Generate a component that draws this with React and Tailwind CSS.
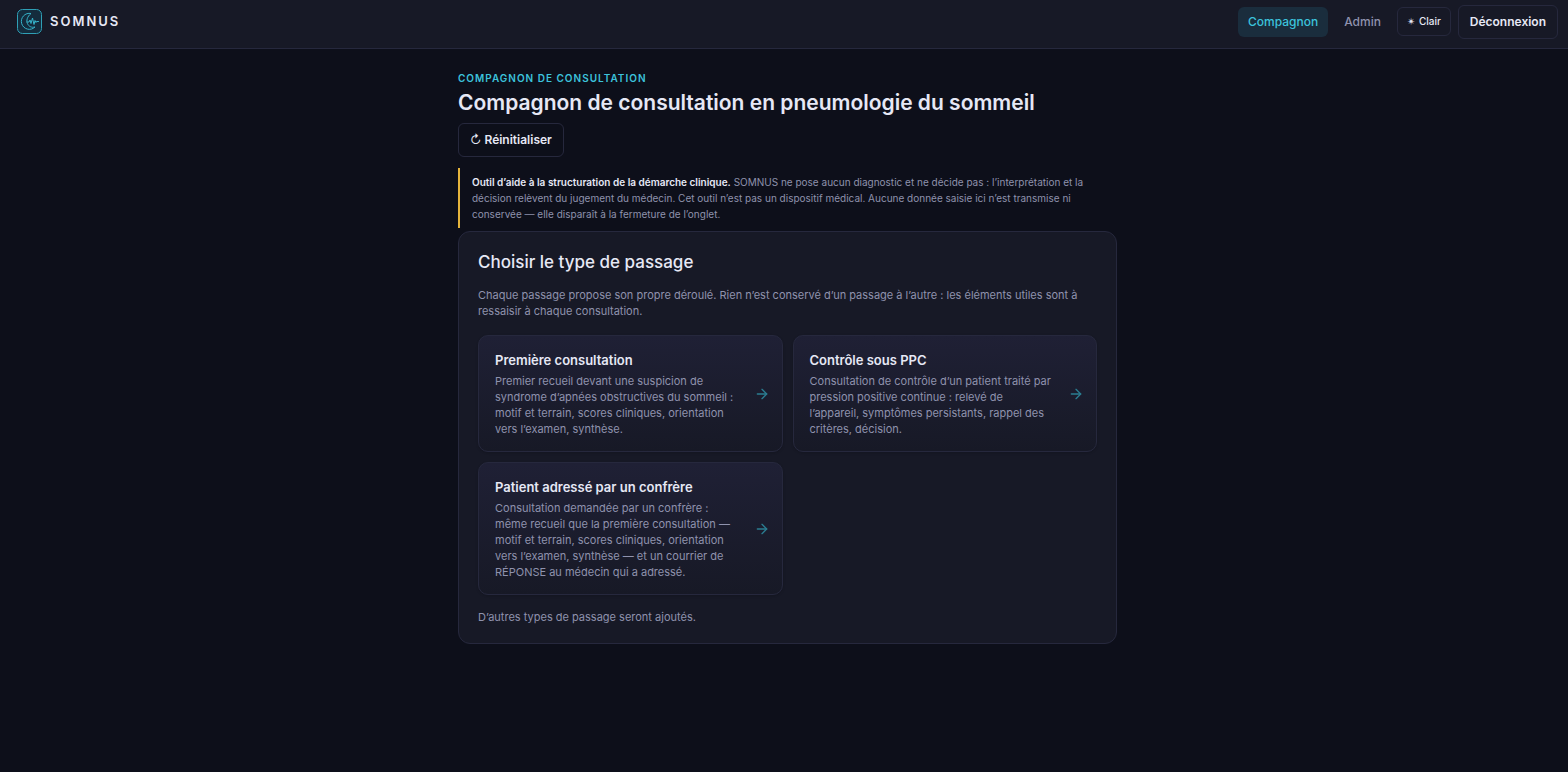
import React from "react";
import { ArrowRight } from "lucide-react";

const passages = [
  {
    id: "premiere",
    title: "Première consultation",
    text: "Premier recueil devant une suspicion de syndrome d’apnées obstructives du sommeil : motif et terrain, scores cliniques, orientation vers l’examen, synthèse.",
  },
  {
    id: "controle",
    title: "Contrôle sous PPC",
    text: "Consultation de contrôle d’un patient traité par pression positive continue : relevé de l’appareil, symptômes persistants, rappel des critères, décision.",
  },
  {
    id: "confrere",
    title: "Patient adressé par un confrère",
    text: "Consultation demandée par un confrère : même recueil que la première consultation — motif et terrain, scores cliniques, orientation vers l’examen, synthèse — et un courrier de RÉPONSE au médecin qui a adressé.",
  },
];

function Logo() {
  return (
    <svg viewBox="0 0 50 50" className="w-[25px] h-[25px]" fill="none">
      <rect x="1" y="1" width="48" height="48" rx="10" fill="#142c3d" stroke="#2f9fb5" strokeWidth="2" />
      <path
        d="M28 9 A16 16 0 1 0 36 36 C22 40 12 22 28 9 Z"
        stroke="#36b3ca"
        strokeWidth="2"
        strokeLinejoin="round"
      />
      <path
        d="M20 26 H24 L26 22 L28 29 L31 18 L34 31 L36 23 L38 27 L39 25 H43"
        stroke="#36b3ca"
        strokeWidth="2"
        strokeLinecap="round"
        strokeLinejoin="round"
      />
    </svg>
  );
}

function Header() {
  return (
    <header className="flex items-center justify-between h-[49px] pl-[17px] pr-[10px] pb-[5px] bg-[#171926] border-b border-[#26283d]">
      <a href="#accueil" className="flex items-center gap-2">
        <Logo />
        <span className="text-[13px] font-semibold tracking-[2px]">SOMNUS</span>
      </a>
      <nav className="flex items-center text-[12px] font-medium">
        <a
          href="#compagnon"
          className="px-[10px] py-[6px] leading-[18px] rounded-md bg-[#1a2d3d] text-[#3cc3dc]"
        >
          Compagnon
        </a>
        <a href="#admin" className="px-4 text-[#8f92ad]">
          Admin
        </a>
        <button
          type="button"
          className="flex items-center gap-1 h-[29px] px-[9px] text-[10px] font-medium rounded-md border border-[#26283d]"
        >
          <span>✴</span> Clair
        </button>
        <button
          type="button"
          className="h-[34px] ml-[7px] px-[11px] font-semibold rounded-md border border-[#26283d]"
        >
          Déconnexion
        </button>
      </nav>
    </header>
  );
}

function PassageCard({ title, text }) {
  return (
    <button
      type="button"
      className="flex items-center gap-[15px] pl-4 pr-3 py-[14px] text-left rounded-[10px] border border-[#26283d] bg-linear-to-b from-[#1f2035] to-[#171926] shadow-sm"
    >
      <span className="flex-1">
        <span className="block text-[13px] leading-[20px] font-semibold">{title}</span>
        <span className="block mt-[3px] text-[11px] leading-[16px] text-[#8f92ad]">{text}</span>
      </span>
      <ArrowRight className="w-4 h-4 shrink-0 text-[#2b7d91]" strokeWidth={2} />
    </button>
  );
}

function App() {
  return (
    <div className="min-h-screen bg-white">
      <div className="min-h-[calc(100vh-12px)] bg-[#0d0f1a] text-[#e6e8f5] font-[Inter,sans-serif]">
        <Header />
        <main className="w-full max-w-[666px] mx-auto pl-[7px] pt-[22px]">
          <p className="text-[10px] leading-[14px] font-semibold tracking-[1px] text-[#3cc3dc]">
            COMPAGNON DE CONSULTATION
          </p>
          <h1 className="mt-1 text-[21px] leading-[28px] font-semibold">
            Compagnon de consultation en pneumologie du sommeil
          </h1>
          <button
            type="button"
            className="mt-[6px] flex items-center gap-[3px] h-[34px] px-[11px] text-[12px] font-semibold rounded-md border border-[#26283d]"
          >
            <span className="font-normal">↻</span> Réinitialiser
          </button>

          <aside className="mt-[11px] pl-3 pr-4 py-[6px] text-[10px] leading-[16px] text-[#8f92ad] border-l-2 border-[#e5b43c]">
            <strong className="font-semibold text-[#e6e8f5]">
              Outil d’aide à la structuration de la démarche clinique.
            </strong>{" "}
            SOMNUS ne pose aucun diagnostic et ne décide pas : l’interprétation et la décision
            relèvent du jugement du médecin. Cet outil n’est pas un dispositif médical. Aucune
            donnée saisie ici n’est transmise ni conservée — elle disparaît à la fermeture de
            l’onglet.
          </aside>

          <section className="mt-[3px] px-[19px] pt-[17px] pb-[18px] rounded-xl border border-[#26283d] bg-[#171926]">
            <h2 className="text-[17px] leading-[26px] font-medium">Choisir le type de passage</h2>
            <p className="mt-3 text-[11px] leading-[16px] text-[#8f92ad]">
              Chaque passage propose son propre déroulé. Rien n’est conservé d’un passage à l’autre
              : les éléments utiles sont à ressaisir à chaque consultation.
            </p>
            <div className="mt-4 grid grid-cols-2 gap-[10px]">
              {passages.map((passage) => (
                <PassageCard key={passage.id} title={passage.title} text={passage.text} />
              ))}
            </div>
            <p className="mt-[14px] text-[11px] leading-[16px] text-[#8f92ad]">
              D’autres types de passage seront ajoutés.
            </p>
          </section>
        </main>
      </div>
    </div>
  );
}

export default App;
